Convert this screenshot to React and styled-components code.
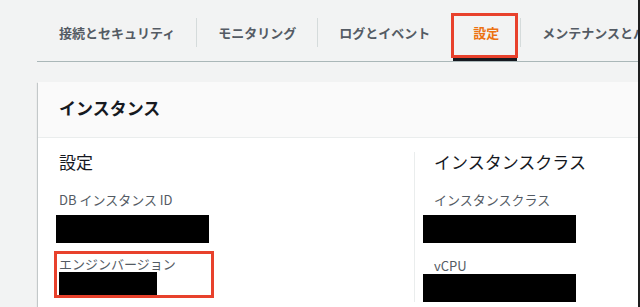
import styled, { createGlobalStyle } from "styled-components";

const GlobalStyle = createGlobalStyle`
  html, body {
    margin: 0;
    padding: 0;
    background: #f2f3f3;
    overflow: hidden;
  }
  body {
    font-family: "Noto Sans CJK JP", "Noto Sans", sans-serif;
    color: #16191f;
  }
`;

const Screen = styled.div`
  display: flex;
  width: 640px;
  height: 307px;
  overflow: hidden;
  background: #f2f3f3;
`;

const Content = styled.div`
  flex: 1;
  min-width: 0;
  overflow: hidden;
  padding-left: 37px;
`;

// 画面右端の黒いふち
const Edge = styled.div`
  width: 2px;
  flex: none;
  background: #1e1e1e;
`;

const TabBar = styled.div`
  display: flex;
  padding: 13px 0 0 1px;
  border-bottom: 1px solid #aab7b8;
  white-space: nowrap;
`;

const Tab = styled.div`
  position: relative;
  flex: none;
  height: 48px;
  box-sizing: border-box;
  padding: 12px 21px 0;
  font-size: 13px;
  line-height: 16px;
  font-weight: 700;
  color: ${({ $active }) => ($active ? "#ec7211" : "#545b64")};

  ${({ $active }) =>
    $active &&
    `
    &::after {
      content: "";
      position: absolute;
      left: 1px;
      right: 3px;
      bottom: 0;
      height: 3px;
      background: #16191f;
    }
  `}
`;

// スクリーンショット上の注釈の赤枠
const Mark = styled.span`
  position: absolute;
  top: 0;
  left: -1px;
  right: 2px;
  bottom: 3px;
  border: 3px solid #e8412c;
  pointer-events: none;
`;

const TabDivider = styled.span`
  flex: none;
  width: 1px;
  height: 29px;
  margin-top: 5px;
  background: #d5dbdb;
`;

const Panel = styled.div`
  margin-top: 20px;
  margin-left: 1px;
  background: #fff;
  box-shadow: 0 1px 1px 0 rgba(0, 28, 36, 0.3),
    1px 1px 1px 0 rgba(0, 28, 36, 0.15), -1px 1px 1px 0 rgba(0, 28, 36, 0.15);
`;

const PanelHeader = styled.div`
  height: 56px;
  box-sizing: border-box;
  padding: 14px 21px 0;
  background: #fafafa;
  border-bottom: 1px solid #eaeded;
  font-size: 17px;
  line-height: 24px;
  font-weight: 700;
  color: #16191f;
`;

const PanelBody = styled.div`
  display: flex;
  padding: 14px 21px 40px;
`;

const Column = styled.div`
  width: ${({ $width }) => $width || "auto"};
  flex: ${({ $width }) => ($width ? "none" : "1")};
  padding-left: ${({ $divided }) => ($divided ? "19px" : "0")};
  border-left: ${({ $divided }) => ($divided ? "1px solid #eaeded" : "none")};
`;

const ColumnTitle = styled.div`
  font-size: 17px;
  line-height: 20px;
  color: #16191f;
  margin-bottom: 20px;
`;

const Label = styled.div`
  font-size: 13px;
  line-height: 16px;
  color: #545b64;
  white-space: nowrap;
`;

// 伏せ字の黒塗り
const Redacted = styled.div`
  width: ${({ $w }) => $w}px;
  height: ${({ $h }) => $h || 28}px;
  margin-top: ${({ $top }) => $top ?? 7}px;
  margin-left: ${({ $shift }) => $shift || 0}px;
  background: #000;
`;

const Field = styled.div`
  margin-top: ${({ $top }) => $top || 0}px;
`;

const MarkedField = styled.div`
  width: 152px;
  margin: 8px 0 0 -5px;
  padding: 2px 0 0 2px;
  border: 3px solid #e8412c;
`;

const tabs = [
  "接続とセキュリティ",
  "モニタリング",
  "ログとイベント",
  "設定",
  "メンテナンスとバックアップ",
];

export default function App() {
  return (
    <>
      <GlobalStyle />
      <Screen>
        <Content>
          <TabBar>
            {tabs.map((name, i) => (
              <span key={name} style={{ display: "contents" }}>
                {i > 0 && <TabDivider />}
                <Tab $active={name === "設定"}>
                  {name}
                  {name === "設定" && <Mark />}
                </Tab>
              </span>
            ))}
          </TabBar>

          <Panel>
            <PanelHeader>インスタンス</PanelHeader>
            <PanelBody>
              <Column $width="355px">
                <ColumnTitle>設定</ColumnTitle>
                <Field>
                  <Label>DB インスタンス ID</Label>
                  <Redacted $w={153} $shift={-3} />
                </Field>
                <MarkedField>
                  <Label>エンジンバージョン</Label>
                  <Redacted $w={98} $h={23} $top={0} />
                </MarkedField>
              </Column>
              <Column $divided>
                <ColumnTitle>インスタンスクラス</ColumnTitle>
                <Field>
                  <Label>インスタンスクラス</Label>
                  <Redacted $w={153} $shift={-11} />
                </Field>
                <Field $top={15}>
                  <Label>vCPU</Label>
                  <Redacted $w={153} $shift={-11} $top={0} />
                </Field>
              </Column>
            </PanelBody>
          </Panel>
        </Content>
        <Edge />
      </Screen>
    </>
  );
}
